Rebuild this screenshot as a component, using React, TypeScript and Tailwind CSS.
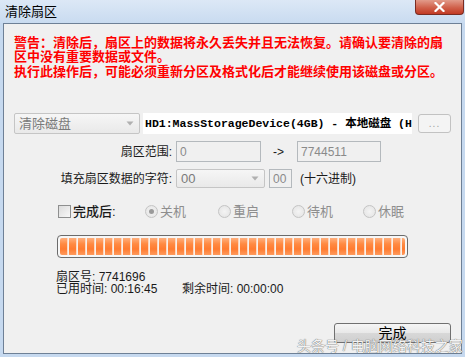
import React from 'react';

const FONT = "font-['Liberation_Sans','Noto_Sans_CJK_SC',sans-serif]";

function Arrow() {
  return (
    <svg width="8" height="5" viewBox="0 0 8 5" className="shrink-0">
      <path d="M0.5 0.5 L7.5 0.5 L4 4.5 Z" fill="#b0b0b0" />
    </svg>
  );
}

function Combo({ width, text }: { width: string; text?: string }) {
  return (
    <div
      className={`${width} h-full flex items-center justify-between pl-[4px] pr-[5px] rounded-[2px] border border-[#c5c5c5] bg-[linear-gradient(to_bottom,#f6f6f6,#e9e9e9)] text-[#7a7a7a]`}
    >
      <span className="text-[13px] leading-none">{text}</span>
      <Arrow />
    </div>
  );
}

function Field({ width, text }: { width: string; text: string }) {
  return (
    <div
      className={`${width} h-full flex items-center pl-[3px] border border-[#b4b9bd] bg-[#f0f0f0] text-[12px] text-[#8a8a8a] leading-none`}
    >
      {text}
    </div>
  );
}

function Radio({ label, checked, width }: { label: string; checked?: boolean; width: string }) {
  return (
    <div className={`${width} flex items-center`}>
      <div className="w-[13px] h-[13px] rounded-full border border-[#c4c4c4] bg-[radial-gradient(circle,#f4f4f4,#e2e2e2)] flex items-center justify-center">
        {checked && <div className="w-[5px] h-[5px] rounded-full bg-[#9a9a9a]" />}
      </div>
      <span className="ml-[2px] text-[13px] leading-none text-[#8e8e8e]">{label}</span>
    </div>
  );
}

export default function App() {
  return (
    <div className={`${FONT} relative w-[465px] h-[357px] overflow-hidden flex flex-col bg-[#c6d9ef]`}>
      {/* title bar */}
      <div className="h-[23px] flex items-start justify-between pl-[5px] pr-[1px] bg-[linear-gradient(to_bottom,#dce8f6,#c9dbf0)]">
        <span className="mt-[4px] text-[13px] leading-[16px] text-black">清除扇区</span>
        <div className="w-[49px] h-[15px] flex items-center justify-center rounded-b-[4px] border border-t-0 border-[#7a2c22] bg-[linear-gradient(to_bottom,#e29b8a,#d0604a_55%,#c23a24)]">
          <svg width="11" height="10" viewBox="0 0 11 10">
            <path d="M1.5 1 L9.5 9 M9.5 1 L1.5 9" stroke="#fff" strokeWidth="2.2" strokeLinecap="square" />
          </svg>
        </div>
      </div>

      {/* client area */}
      <div className="mx-[3px] h-[331px] border border-[#6e8096] bg-[#f0f0f0] flex flex-col">
        <div className="pt-[12px] pl-[10px] text-[13px] leading-[14px] font-bold text-[#ff0000] whitespace-nowrap">
          <div>警告：清除后，扇区上的数据将永久丢失并且无法恢复。请确认要清除的扇</div>
          <div>区中没有重要数据或文件。</div>
          <div className="mt-[1px]">执行此操作后，可能必须重新分区及格式化后才能继续使用该磁盘或分区。</div>
        </div>

        {/* mode + device */}
        <div className="mt-[34px] h-[21px] pl-[10px] flex items-center">
          <Combo width="w-[126px]" text="清除磁盘" />
          <div className="ml-[3px] w-[269px] h-full bg-white flex items-center pl-[2px] overflow-hidden whitespace-nowrap">
            <span className="font-['Liberation_Mono','Noto_Sans_CJK_SC',monospace] font-bold text-[11.5px] leading-none text-black">
              HD1:MassStorageDevice(4GB) - 本地磁盘 (H:)
            </span>
          </div>
          <div className="ml-[6px] w-[33px] h-[19px] rounded-[3px] border border-[#c2c2c2] bg-[#f4f4f4] flex items-center justify-center text-[10px] leading-none text-[#a0a0a0] tracking-[1px]">
            ...
          </div>
        </div>

        {/* sector range */}
        <div className="mt-[7px] h-[21px] flex items-center">
          <div className="w-[168px] text-right text-[12px] leading-none text-[#1a1a1a]">扇区范围:</div>
          <div className="ml-[4px] h-full">
            <Field width="w-[85px]" text="0" />
          </div>
          <span className="ml-[12px] w-[24px] text-[12px] leading-none text-[#1a1a1a]">-&gt;</span>
          <div className="h-full">
            <Field width="w-[84px]" text="7744511" />
          </div>
        </div>

        {/* fill char */}
        <div className="mt-[7px] h-[19px] flex items-center">
          <div className="w-[168px] text-right text-[12px] leading-none text-[#1a1a1a]">填充扇区数据的字符:</div>
          <div className="ml-[4px] h-full">
            <Combo width="w-[89px]" text="00" />
          </div>
          <div className="ml-[4px] h-full">
            <Field width="w-[23px]" text="00" />
          </div>
          <span className="ml-[8px] text-[12px] leading-none text-[#1a1a1a]">(十六进制)</span>
        </div>

        {/* after completion */}
        <div className="mt-[16px] h-[14px] pl-[54px] flex items-center">
          <div className="w-[87px] flex items-center">
            <div className="w-[13px] h-[13px] border border-[#8e8f8f] bg-[linear-gradient(135deg,#dcdcdc,#f8f8f8)]" />
            <span className="ml-[2px] text-[13px] leading-none font-medium text-[#1a1a1a]">完成后:</span>
          </div>
          <Radio width="w-[73px]" label="关机" checked />
          <Radio width="w-[74px]" label="重启" />
          <Radio width="w-[71px]" label="待机" />
          <Radio width="w-[60px]" label="休眠" />
        </div>

        {/* progress */}
        <div className="mt-[17px] ml-[53px] w-[351px] h-[23px] rounded-[4px] border border-[#6b6b6b] bg-[#f7f7f7] p-[2px]">
          <div className="w-full h-full rounded-[2px] bg-[linear-gradient(to_bottom,#ffb07e,#ff8a42_35%,#ff7b30_65%,#ff9a5c)]">
            <div className="w-full h-full bg-[repeating-linear-gradient(90deg,transparent_0px,transparent_7px,#ffd6bd_7px,#ffd6bd_8px,#f6f0ea_8px,#f6f0ea_9px)]" />
          </div>
        </div>

        {/* status */}
        <div className="mt-[13px] pl-[52px] text-[12px] leading-[12px] text-[#1a1a1a]">
          <div>扇区号: 7741696</div>
          <div className="flex">
            <span className="w-[126px]">已用时间: 00:16:45</span>
            <span>剩余时间: 00:00:00</span>
          </div>
        </div>

        {/* done */}
        <div className="mt-[28px] pr-[10px] flex justify-end">
          <div className="w-[117px] h-[20px] rounded-[3px] border border-[#707070] bg-[linear-gradient(to_bottom,#f5f5f5,#e8e8e8_50%,#d8d8d8_51%,#cfcfcf)] flex items-center justify-center text-[14px] leading-none text-black">
            完成
          </div>
        </div>
      </div>

      {/* watermark */}
      <div className="absolute left-[297px] top-[337px] text-[14px] leading-[18px] whitespace-nowrap text-[#f2f2f2] [text-shadow:0_0_1px_#6e6e6e,0_0_1px_#6e6e6e]">
        头条号 / 电脑网络科技之家
      </div>
    </div>
  );
}
